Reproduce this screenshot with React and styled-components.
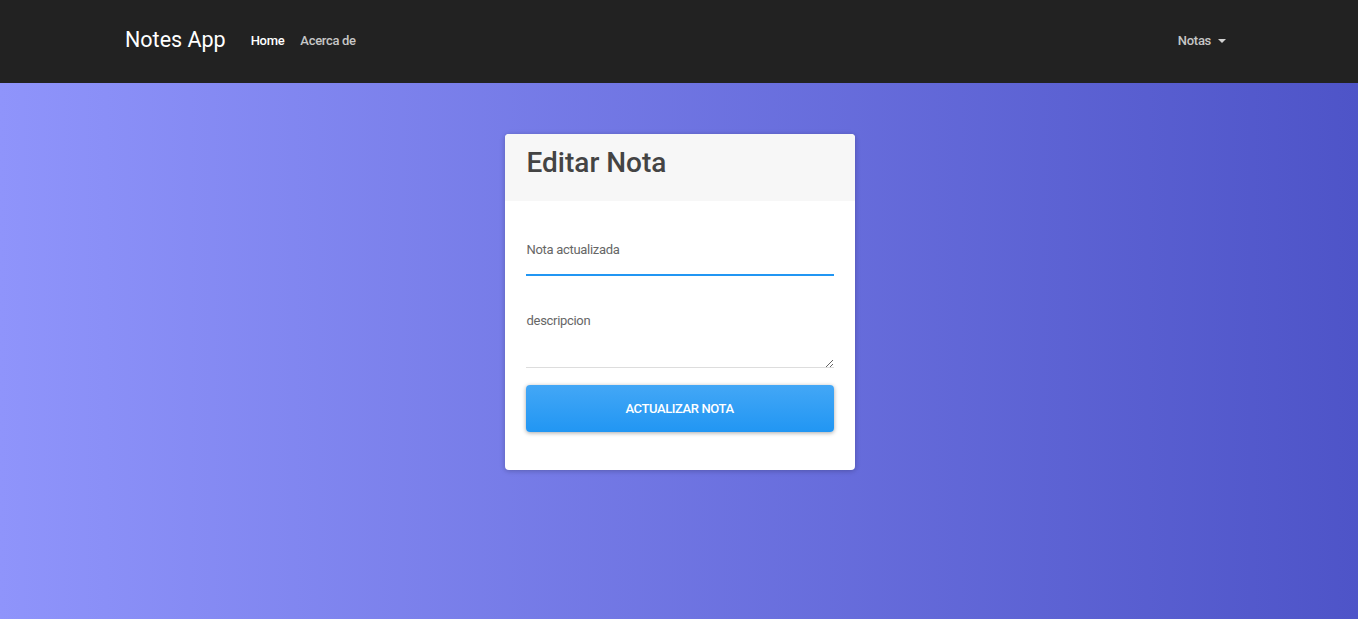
import React from 'react'
import styled, { createGlobalStyle } from 'styled-components'

const GlobalStyle = createGlobalStyle`
  * { box-sizing: border-box; }
  html, body { margin: 0; padding: 0; }
  body {
    font-family: Roboto, "Liberation Sans", sans-serif;
    font-size: 13px;
    color: #444;
    background: linear-gradient(to right, #8f94fb, #4e54c8);
    min-height: 100vh;
  }
`

const Navbar = styled.nav`
  background: #222;
  height: 83px;
  display: flex;
  align-items: center;
  padding-bottom: 2px;
`

const Container = styled.div`
  width: 1140px;
  margin: 0 auto;
  padding: 0 15px 0 16px;
  display: flex;
  align-items: center;
`

const Brand = styled.a`
  color: #fff;
  font-size: 21.5px;
  line-height: 1;
  margin-right: 17px;
  text-decoration: none;
  padding-bottom: 1px;
`

const NavList = styled.ul`
  display: flex;
  list-style: none;
  margin: 0;
  padding: 0;
  margin-left: ${p => (p.$right ? 'auto' : '0')};
`

const NavLink = styled.a`
  display: flex;
  align-items: center;
  padding: 0 8px;
  font-size: 13px;
  font-weight: 500;
  letter-spacing: -0.3px;
  color: ${p => (p.$active ? '#fff' : 'rgba(255,255,255,0.75)')};
  text-decoration: none;
`

const Caret = styled.span`
  display: inline-block;
  margin-left: 7px;
  border-top: 4px solid rgba(255,255,255,0.8);
  border-left: 4px solid transparent;
  border-right: 4px solid transparent;
`

const Main = styled.main`
  display: flex;
  justify-content: center;
  padding: 51px 0 0 1px;
`

const Card = styled.div`
  width: 350px;
  background: #fff;
  border-radius: 4px;
  overflow: hidden;
  box-shadow: 0 1px 6px rgba(0,0,0,0.12), 0 1px 4px rgba(0,0,0,0.12);
`

const CardHeader = styled.div`
  background: #f7f7f7;
  height: 67px;
  padding: 12px 21px 0 22px;
`

const Title = styled.h3`
  margin: 0;
  font-size: 28px;
  font-weight: 500;
  line-height: 34px;
  color: #444;
`

const CardBody = styled.form`
  padding: 32px 21px 38px 21px;
  display: flex;
  flex-direction: column;
`

const Input = styled.input`
  height: 43px;
  padding: 0 1px 10px;
  border: none;
  outline: none;
  font-family: inherit;
  font-size: 13px;
  letter-spacing: -0.3px;
  color: #444;
  box-shadow: inset 0 -2px 0 #2196f3;
  &::placeholder { color: #666; }
`

const TextArea = styled.textarea`
  margin-top: 28px;
  height: 64px;
  padding: 8px 1px 0;
  border: none;
  outline: none;
  resize: vertical;
  font-family: inherit;
  font-size: 13px;
  letter-spacing: -0.3px;
  line-height: 18px;
  color: #444;
  box-shadow: inset 0 -1px 0 #ddd;
  &::placeholder { color: #666; }
`

const Button = styled.button`
  margin-top: 17px;
  height: 47px;
  border: none;
  border-radius: 4px;
  background: linear-gradient(to bottom, #43a7f6, #2196f3);
  box-shadow: 0 1px 4px rgba(0,0,0,0.35);
  color: #fff;
  font-family: inherit;
  font-size: 13px;
  font-weight: 500;
  letter-spacing: -0.4px;
  text-transform: uppercase;
  cursor: pointer;
`

export default function App() {
  return (
    <>
      <GlobalStyle />
      <Navbar>
        <Container>
          <Brand href="#">Notes App</Brand>
          <NavList>
            <li><NavLink href="#" $active>Home</NavLink></li>
            <li><NavLink href="#">Acerca de</NavLink></li>
          </NavList>
          <NavList $right>
            <li><NavLink href="#">Notas<Caret /></NavLink></li>
          </NavList>
        </Container>
      </Navbar>
      <Main>
        <Card>
          <CardHeader>
            <Title>Editar Nota</Title>
          </CardHeader>
          <CardBody onSubmit={e => e.preventDefault()}>
            <Input type="text" placeholder="Nota actualizada" />
            <TextArea placeholder="descripcion" />
            <Button type="submit">Actualizar Nota</Button>
          </CardBody>
        </Card>
      </Main>
    </>
  )
}
